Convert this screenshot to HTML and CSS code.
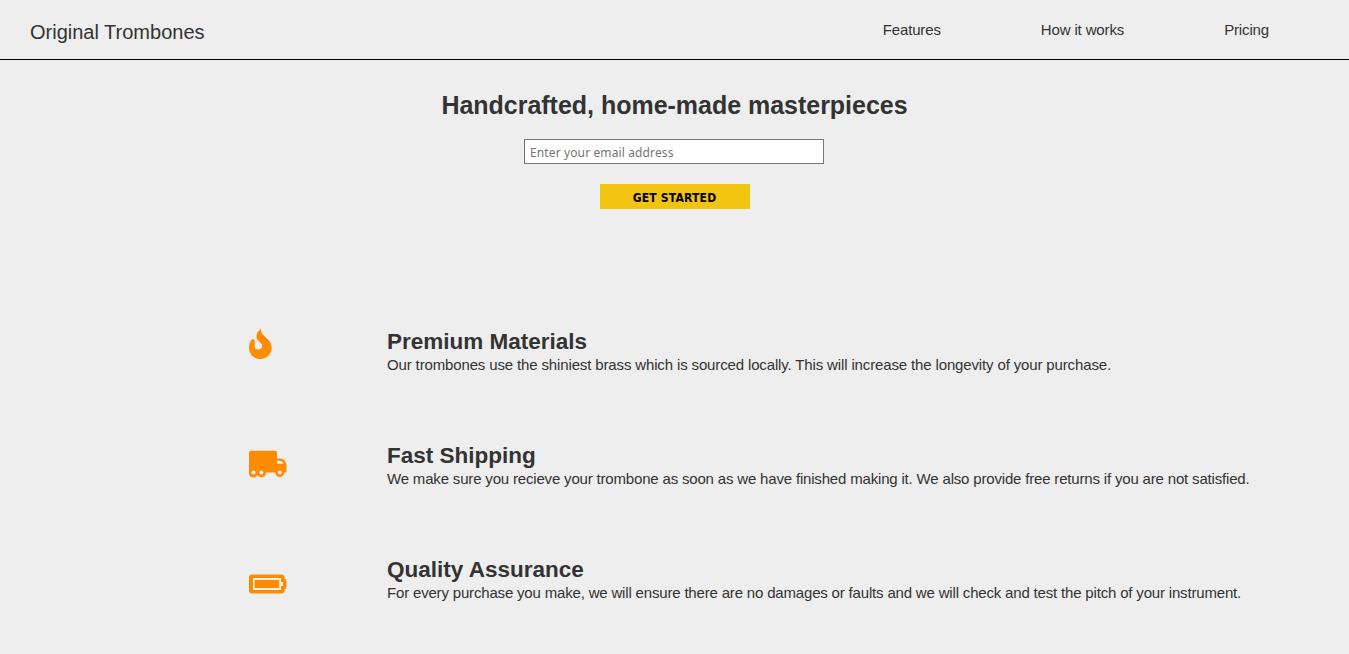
FILE: index.html
```html
<!DOCTYPE html>
<html lang="en">
<head>
<meta charset="utf-8">
<title>Original Trombones</title>
<link rel="stylesheet" href="styles.css">
</head>
<body>
<header class="header">
  <div class="brand">Original Trombones</div>
  <nav class="nav">
    <a class="nav-link" href="#features">Features</a>
    <a class="nav-link" href="#how">How it works</a>
    <a class="nav-link" href="#pricing">Pricing</a>
  </nav>
</header>
<main>
  <section class="hero">
    <h1 class="hero-title">Handcrafted, home-made masterpieces</h1>
    <form class="form">
      <input class="email" type="email" placeholder="Enter your email address">
      <button class="submit" type="button">GET STARTED</button>
    </form>
  </section>
  <section class="features" id="features">
    <article class="feature">
      <svg class="icon" viewBox="0 0 40 32" width="40" height="32">
        <path d="M12.500 1C9.500 3.300 8.200 6.500 8.500 9.500C8.900 13 14.200 14.500 14.200 18C14.200 20.200 12.600 21.600 10.300 21.600C8 21.600 6.500 20.200 6.500 18C6.500 16.100 7.300 14.300 6.600 12.400C6.200 11.300 5.200 11 4 11.300C1.900 13.300 1 16.500 1 19.500C1 26.200 5.800 31 12.200 31C18.800 31 23.700 26.300 23.700 19.800C23.700 10.300 13.400 9.500 12.500 1Z"/>
      </svg>
      <div class="copy">
        <h2 class="feature-title">Premium Materials</h2>
        <p class="text">Our trombones use the shiniest brass which is sourced locally. This will increase the longevity of your purchase.</p>
      </div>
    </article>
    <article class="feature">
      <svg class="icon" viewBox="0 0 40 32" width="40" height="32">
        <path fill-rule="evenodd" d="M3 1.700H27Q29 1.700 29 3.700V9.500H31.500C36 9.500 38.500 13 38.500 16.500V22Q38.500 23.500 37.300 23.500H36.300A4.500 4.500 0 1 1 27.300 23.500H17.900A4.500 4.500 0 0 1 9.500 26A4.500 4.500 0 0 1 1 23.500V3.700Q1 1.700 3 1.700ZM29 11.700V14.800H35.700Q34.500 11.700 31 11.700ZM5.500 21.600A2 2 0 1 0 5.500 25.600A2 2 0 1 0 5.500 21.600ZM13.400 21.600A2 2 0 1 0 13.400 25.600A2 2 0 1 0 13.400 21.600ZM31.800 21.600A2 2 0 1 0 31.800 25.600A2 2 0 1 0 31.800 21.600Z"/>
      </svg>
      <div class="copy">
        <h2 class="feature-title">Fast Shipping</h2>
        <p class="text">We make sure you recieve your trombone as soon as we have finished making it. We also provide free returns if you are not satisfied.</p>
      </div>
    </article>
    <article class="feature">
      <svg class="icon" viewBox="0 0 40 32" width="40" height="32">
        <path fill-rule="evenodd" d="M4 6.500H33.500Q36.300 6.500 36.500 9.500V10.700Q38.500 11 38.500 13V19Q38.500 21 36.500 21.300V22.500Q36.300 25.500 33.500 25.500H4Q1 25.500 1 22.500V9.500Q1 6.500 4 6.500ZM5 10V22H33V18H35V14H33V10ZM6.700 12H31.300V20H6.700Z"/>
      </svg>
      <div class="copy">
        <h2 class="feature-title">Quality Assurance</h2>
        <p class="text">For every purchase you make, we will ensure there are no damages or faults and we will check and test the pitch of your instrument.</p>
      </div>
    </article>
  </section>
</main>
</body>
</html>
```
FILE: styles.css
```css
* { box-sizing: border-box; margin: 0; padding: 0; }

body {
  min-height: 654px;
  background: #eee;
  color: #333;
  font: 15px/17px "Liberation Sans", Arial, sans-serif;
  overflow: hidden;
}

.header {
  display: flex;
  justify-content: space-between;
  height: 60px;
  padding: 20px 80px 0 30px;
  border-bottom: 1px solid #000;
}

.brand { font-size: 20px; line-height: 24px; }

.nav { display: flex; gap: 100px; padding-top: 1px; }

.nav-link { color: inherit; text-decoration: none; white-space: nowrap; letter-spacing: -0.14px; }

.hero { text-align: center; padding-top: 30px; }

.hero-title { font-size: 25px; line-height: 30px; letter-spacing: -0.02px; }

.form { display: flex; flex-direction: column; align-items: center; margin-top: 19px; }

.email {
  width: 300px;
  height: 25px;
  margin-right: 1px;
  padding: 2px 5px 0;
  border: 1px solid #767676;
  background: #fff;
  font: 12px "Noto Sans", sans-serif;
  letter-spacing: 0.12px;
}

.email::placeholder { color: #757575; }

.submit {
  width: 150px;
  height: 25px;
  margin-top: 20px;
  padding-top: 2px;
  border: 0;
  background: #f1c40f;
  color: #000;
  font: bold 12px "DejaVu Sans Condensed", "DejaVu Sans", sans-serif;
  font-stretch: condensed;
  letter-spacing: 0.2px;
}

.features { padding: 119px 0 0 248px; }

.feature { display: flex; height: 114px; }

.icon { flex: none; margin-right: 99px; fill: #ff8c00; }

.feature:nth-child(2) .icon { margin-top: 7px; }

.feature:nth-child(3) .icon { margin-top: 12px; }

.copy { padding-top: 1px; white-space: nowrap; }

.feature-title { font-size: 22.5px; line-height: 25px; padding-bottom: 2px; }

.text { letter-spacing: -0.176px; }

.feature:first-child .text { letter-spacing: -0.14px; }
```
